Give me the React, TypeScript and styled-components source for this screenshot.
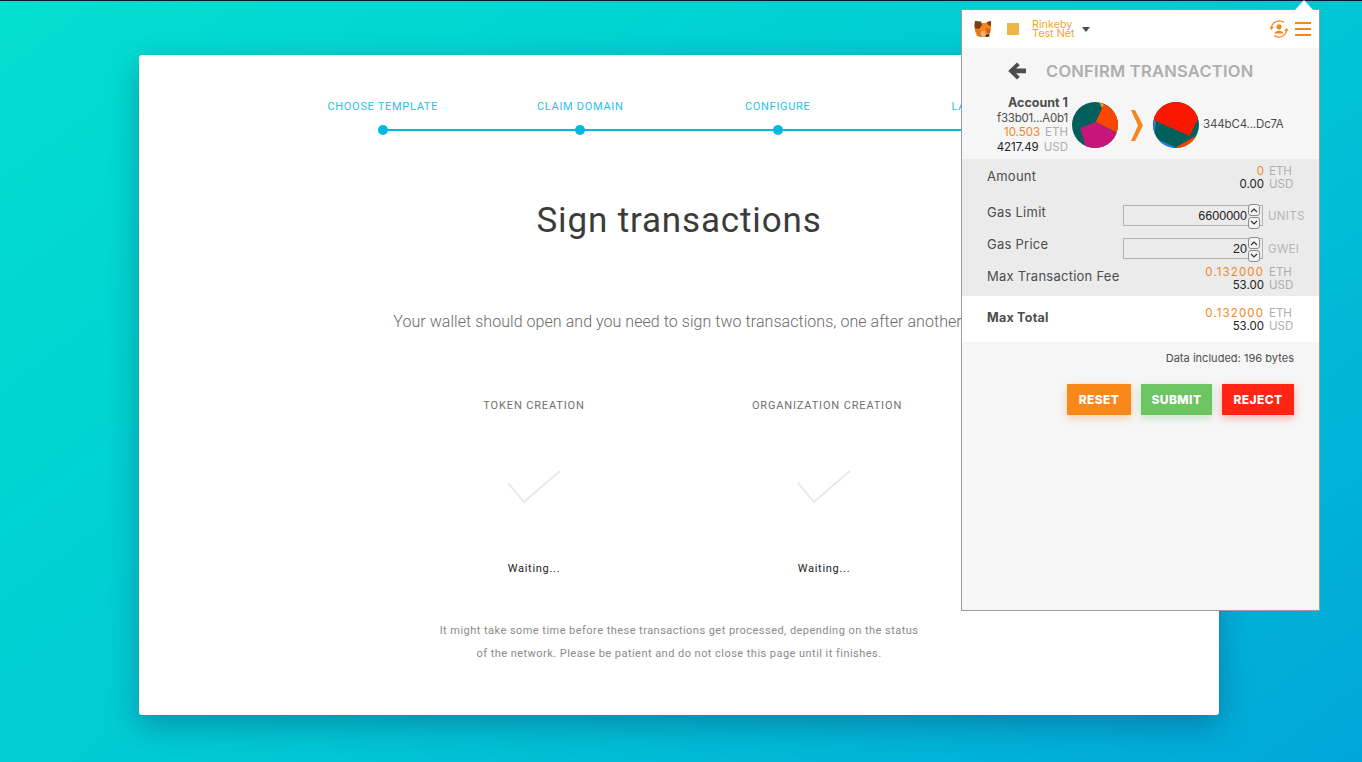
import React from "react";
import styled, { createGlobalStyle } from "styled-components";

const Global = createGlobalStyle`
  html, body { margin: 0; padding: 0; }
  body { width: 1362px; height: 762px; overflow: hidden; }
  * { box-sizing: border-box; }
`;

const Page = styled.div`
  position: relative;
  width: 1362px;
  height: 762px;
  border-top: 1px solid #0a1c20;
  padding: 54px 143px 47px 139px;
  background: linear-gradient(143deg, #03dfd0 0%, #00c9d4 52%, #00a6d9 100%);
  font-family: "Roboto", "Liberation Sans", sans-serif;
`;

const Card = styled.main`
  width: 1080px;
  height: 660px;
  background: #fff;
  border-radius: 3px;
  box-shadow: 0 10px 30px rgba(20, 40, 90, 0.35);
  padding-top: 45px;
  display: flex;
  flex-direction: column;
  align-items: center;
`;

const Stepper = styled.ol`
  list-style: none;
  margin: 0;
  padding: 0;
  width: 790px;
  display: grid;
  grid-template-columns: repeat(4, 1fr);
`;

const Step = styled.li<{ $last?: boolean }>`
  position: relative;
  height: 36px;
  text-align: center;
  font-size: 11px;
  line-height: 14px;
  letter-spacing: 0.7px;
  color: #1fc3e6;
  &::before {
    content: "";
    position: absolute;
    left: 50%;
    top: 29px;
    width: ${(p) => (p.$last ? "0" : "100%")};
    height: 2px;
    background: #00b9e3;
  }
  &::after {
    content: "";
    position: absolute;
    left: calc(50% - 5px);
    top: 25px;
    width: 10px;
    height: 10px;
    border-radius: 50%;
    background: #00b9e3;
  }
`;

const Title = styled.h1`
  margin: 62px 0 0;
  font-size: 35px;
  line-height: 46px;
  font-weight: 400;
  letter-spacing: 0.85px;
  color: #3b3b3b;
`;

const Lead = styled.p`
  margin: 67px 0 0;
  font-size: 16px;
  line-height: 22px;
  letter-spacing: 0.05px;
  font-weight: 300;
  color: #6a6a6a;
`;

const Tasks = styled.div`
  margin-top: 65px;
  width: 580px;
  display: grid;
  grid-template-columns: 1fr 1fr;
`;

const Task = styled.section`
  display: flex;
  flex-direction: column;
  align-items: center;
`;

const TaskName = styled.h2<{ $nudge?: number }>`
  margin: 0;
  padding-left: ${(p) => p.$nudge ?? 0}px;
  font-size: 11px;
  line-height: 16px;
  font-weight: 400;
  letter-spacing: 0.85px;
  color: #6f6f6f;
  white-space: nowrap;
`;

const TaskCheck = styled.svg`
  display: block;
  margin-top: 55px;
  width: 54px;
  height: 36px;
`;

const TaskState = styled.div`
  margin-top: 56px;
  font-size: 11px;
  line-height: 16px;
  letter-spacing: 0.7px;
  color: #222;
`;

const Note = styled.p`
  margin: 42px 0 0;
  text-align: center;
  font-size: 11px;
  line-height: 23px;
  letter-spacing: 0.46px;
  color: #8a8a8a;
`;

const Popup = styled.aside`
  position: absolute;
  left: 961px;
  top: 8px;
  width: 359px;
  height: 602px;
  background: #f6f6f6;
  border: 1px solid #9b9b9b;
  font-family: "Inter", "Liberation Sans", sans-serif;
  color: #4d4d4d;
  &::before {
    content: "";
    position: absolute;
    right: 6px;
    top: -10px;
    border-left: 9px solid transparent;
    border-right: 9px solid transparent;
    border-bottom: 10px solid #fff;
  }
`;

const Header = styled.header`
  height: 38px;
  background: #fff;
  display: flex;
  align-items: center;
  padding: 0 8px 0 12px;
`;

const Swatch = styled.span`
  width: 12px;
  height: 12px;
  margin-left: 15px;
  background: #eeb545;
`;

const Network = styled.div`
  margin-left: 13px;
  font-size: 10.8px;
  line-height: 9.5px;
  color: #f0a81b;
`;

const Caret = styled.span`
  margin-left: 7px;
  margin-top: 1px;
  border-left: 4px solid transparent;
  border-right: 4px solid transparent;
  border-top: 5px solid #4d4d4d;
`;

const HeaderRight = styled.div`
  margin-left: auto;
  display: flex;
  align-items: center;
  gap: 6px;
`;

const Heading = styled.div`
  height: 46px;
  display: flex;
  align-items: center;
  padding-left: 46px;
`;

const HeadingText = styled.h3`
  margin: 0 0 0 20px;
  font-size: 16.5px;
  font-weight: 600;
  letter-spacing: 0.25px;
  color: #aeaeae;
`;

const Accounts = styled.div`
  height: 65px;
  display: flex;
  align-items: flex-start;
`;

const Sender = styled.div`
  width: 106px;
  text-align: right;
  font-size: 11.5px;
  line-height: 14.3px;
  color: #4d4d4d;
  padding-top: 1px;
`;

const SenderName = styled.div`
  font-weight: 700;
  font-size: 12.5px;
  line-height: 15px;
  margin-bottom: 1px;
`;

const Short = styled.div`
  letter-spacing: -0.22px;
`;

const Num = styled.span<{ $accent?: boolean; $wide?: boolean }>`
  color: ${(p) => (p.$accent ? "#f6851b" : "#222")};
  letter-spacing: ${(p) => (p.$wide ? "1.1px" : "0")};
`;

const Unit = styled.span`
  color: #aeaeae;
  margin-left: 5px;
`;

const Pie = styled.svg<{ $gap: number }>`
  flex: none;
  width: 46px;
  height: 46px;
  margin: 8px 0 0 ${(p) => p.$gap}px;
`;

const ChevronIcon = styled.svg`
  flex: none;
  width: 12px;
  height: 31px;
  margin: 16px 0 0 13px;
`;

const Address = styled.div`
  margin: 23px 0 0 4px;
  font-size: 11.5px;
  line-height: 15px;
  letter-spacing: -0.15px;
  color: #4d4d4d;
`;

const Details = styled.div<{ $plain?: boolean }>`
  height: ${(p) => (p.$plain ? "46px" : "137px")};
  background: ${(p) => (p.$plain ? "#fff" : "#ebebeb")};
  padding: ${(p) => (p.$plain ? "10px" : "5px")} 25px 0;
  display: flex;
  flex-direction: column;
`;

const Row = styled.div<{ $h: number }>`
  height: ${(p) => p.$h}px;
  display: flex;
  align-items: flex-start;
  justify-content: space-between;
`;

const Label = styled.div<{ $bold?: boolean; $top?: number }>`
  font-size: ${(p) => (p.$bold ? "12.5px" : "13px")};
  line-height: 16px;
  letter-spacing: 0.25px;
  margin-top: ${(p) => p.$top ?? 0}px;
  font-weight: ${(p) => (p.$bold ? 700 : 400)};
  color: #4d4d4d;
`;

const Amounts = styled.div`
  padding-top: 1px;
  display: grid;
  grid-template-columns: auto 30px;
  font-size: 11.5px;
  line-height: 13px;
  text-align: right;
`;

const AmountUnit = styled.span`
  color: #aeaeae;
  text-align: left;
  padding-left: 5px;
`;

const GasField = styled.div<{ $top?: number }>`
  display: flex;
  align-items: center;
  gap: 5px;
  margin: ${(p) => p.$top ?? 0}px -11px 0 0;
`;

const GasBox = styled.div`
  position: relative;
  width: 140px;
  height: 21px;
  border: 1px solid #b4b4b4;
  background: #ebebeb;
  padding-right: 15px;
  text-align: right;
  font-family: "Liberation Sans", sans-serif;
  font-size: 12.5px;
  line-height: 20px;
  color: #222;
`;

const Spin = styled.div`
  position: absolute;
  right: 2px;
  top: -2px;
  width: 12px;
  display: flex;
  flex-direction: column;
  gap: 1px;
`;

const SpinBtn = styled.span`
  display: flex;
  align-items: center;
  justify-content: center;
  height: 12px;
  background: #f2f2f2;
  border: 1px solid #8c8c8c;
  border-radius: 3px;
`;

const GasUnit = styled.span`
  width: 37px;
  font-size: 11.5px;
  letter-spacing: 0.3px;
  color: #b5b5b5;
`;

const DataNote = styled.div`
  padding: 8px 25px 0 0;
  text-align: right;
  font-size: 11px;
  line-height: 16px;
  letter-spacing: 0.03px;
  color: #4d4d4d;
`;

const Actions = styled.div`
  margin-top: 18px;
  padding-right: 25px;
  display: flex;
  justify-content: flex-end;
  gap: 10px;
`;

const Action = styled.button<{ $bg: string; $shadow: string; $w: number }>`
  width: ${(p) => p.$w}px;
  height: 31px;
  border: 0;
  padding: 0;
  background: ${(p) => p.$bg};
  box-shadow: 0 3px 8px ${(p) => p.$shadow};
  color: #fff;
  font-family: inherit;
  font-size: 12px;
  font-weight: 800;
  letter-spacing: 0.4px;
`;

const Fox = () => (
  <svg width="18" height="18" viewBox="0 0 18 18" aria-hidden="true">
    <polygon points="1,1 7,3 11,3 17,1 17,7 16.5,11 15,16 11,17 7,17 3,16 1,11 0.5,7" fill="#f6851b" />
    <polygon points="1,1 7,1.5 8,5 5,9 1,8.5 0.5,5" fill="#763e1a" />
    <polygon points="13,2 17,1 17,6 14,5" fill="#763e1a" />
    <polygon points="2,10 7,10.5 9,14 8,17 4,16" fill="#e2761b" />
    <polygon points="7,11 11,11 12,16 9,17 6.5,15" fill="#f2b078" />
    <polygon points="12,8 16.5,9 16,13 13,13" fill="#cd6116" />
    <polygon points="11.5,15 15,14 15.5,16.5 12,17" fill="#3a2a1c" />
  </svg>
);

const SwitchIcon = () => (
  <svg width="20" height="20" viewBox="0 0 20 20" fill="none" stroke="#f6851b" strokeWidth="1.3" aria-hidden="true">
    <path d="M2.4 8.5 A8 8 0 0 1 15 3.5" />
    <path d="M17.6 11.5 A8 8 0 0 1 5 16.5" />
    <path d="M0.4 8 L2.6 11 L4.8 8 Z" fill="#f6851b" stroke="none" />
    <path d="M15.2 12 L17.4 9 L19.6 12 Z" fill="#f6851b" stroke="none" />
    <circle cx="10" cy="7.8" r="2.6" fill="#f6851b" stroke="none" />
    <path d="M5.6 14.6 C5.8 10.8 14.2 10.8 14.4 14.6 Z" fill="#f6851b" stroke="none" />
  </svg>
);

const MenuIcon = () => (
  <svg width="16" height="14" viewBox="0 0 16 14" aria-hidden="true">
    <rect y="0" width="16" height="2" fill="#f6851b" />
    <rect y="6" width="16" height="2" fill="#f6851b" />
    <rect y="12" width="16" height="2" fill="#f6851b" />
  </svg>
);

const BackIcon = () => (
  <svg width="18" height="18" viewBox="0 0 18 18" aria-hidden="true">
    <path d="M9 0.5 L11.8 3.2 L8 6.6 H18 V11.2 H8 L11.8 14.7 L9 17.4 L0.2 8.9 Z" fill="#4d4d4d" />
  </svg>
);

const Check = () => (
  <TaskCheck viewBox="0 0 54 36" aria-hidden="true">
    <path d="M1 14 L17 33 L53 2" fill="none" stroke="#e7e7e7" strokeWidth="1.8" />
  </TaskCheck>
);

const Up = () => (
  <svg width="8" height="6" viewBox="0 0 8 6" aria-hidden="true">
    <path d="M1 5 L4 2 L7 5" fill="none" stroke="#333" strokeWidth="1.2" />
  </svg>
);
const Down = () => (
  <svg width="8" height="6" viewBox="0 0 8 6" aria-hidden="true">
    <path d="M1 1 L4 4 L7 1" fill="none" stroke="#333" strokeWidth="1.2" />
  </svg>
);

const Gas = ({ value }: { value: string }) => (
  <GasBox>
    {value}
    <Spin>
      <SpinBtn><Up /></SpinBtn>
      <SpinBtn><Down /></SpinBtn>
    </Spin>
  </GasBox>
);

const Sum = ({ a, b, wide }: { a: string; b: string; wide?: boolean }) => (
  <Amounts>
    <Num $accent $wide={wide}>{a}</Num>
    <AmountUnit>ETH</AmountUnit>
    <Num>{b}</Num>
    <AmountUnit>USD</AmountUnit>
  </Amounts>
);

export default function App() {
  return (
    <>
      <Global />
      <Page>
        <Card>
          <Stepper>
            <Step>CHOOSE TEMPLATE</Step>
            <Step>CLAIM DOMAIN</Step>
            <Step>CONFIGURE</Step>
            <Step $last>LAUNCH</Step>
          </Stepper>
          <Title>Sign transactions</Title>
          <Lead>Your wallet should open and you need to sign two transactions, one after another.</Lead>
          <Tasks>
            <Task>
              <TaskName>TOKEN CREATION</TaskName>
              <Check />
              <TaskState>Waiting...</TaskState>
            </Task>
            <Task>
              <TaskName $nudge={6}>ORGANIZATION CREATION</TaskName>
              <Check />
              <TaskState>Waiting...</TaskState>
            </Task>
          </Tasks>
          <Note>
            It might take some time before these transactions get processed, depending on the status
            <br />
            of the network. Please be patient and do not close this page until it finishes.
          </Note>
        </Card>

        <Popup>
          <Header>
            <Fox />
            <Swatch />
            <Network>Rinkeby<br />Test Net</Network>
            <Caret />
            <HeaderRight>
              <SwitchIcon />
              <MenuIcon />
            </HeaderRight>
          </Header>
          <Heading>
            <BackIcon />
            <HeadingText>CONFIRM TRANSACTION</HeadingText>
          </Heading>
          <Accounts>
            <Sender>
              <SenderName>Account 1</SenderName>
              <Short>f33b01...A0b1</Short>
              <div><Num $accent>10.503</Num><Unit>ETH</Unit></div>
              <div><Num>4217.49</Num><Unit>USD</Unit></div>
            </Sender>
            <Pie $gap={4} viewBox="0 0 46 46" aria-hidden="true">
              <defs><clipPath id="pa"><circle cx="23" cy="23" r="23" /></clipPath></defs>
              <g clipPath="url(#pa)">
                <rect width="46" height="46" fill="#015f5c" />
                <polygon points="23.7,20 31.7,2.7 50,0 50,32 45,30.7" fill="#fb4600" />
                <polygon points="8.3,25.7 23.7,20 46,32 46,50 15,50" fill="#c8157a" />
                <polygon points="27,0 32,2.7 30,6" fill="#f5a00a" />
              </g>
            </Pie>
            <ChevronIcon viewBox="0 0 12 31" aria-hidden="true">
              <path d="M0 0 H4 L12 15.5 L4 31 H0 L7 15.5 Z" fill="#f6851b" />
            </ChevronIcon>
            <Pie $gap={10} viewBox="0 0 46 46" aria-hidden="true">
              <defs><clipPath id="pb"><circle cx="23" cy="23" r="23" /></clipPath></defs>
              <g clipPath="url(#pb)">
                <rect width="46" height="46" fill="#015f5c" />
                <polygon points="0,30 1,18.3 3,19 1.5,32" fill="#2a80e0" />
                <polygon points="6,38 22,45 20,48 8,44" fill="#2a80e0" />
                <polygon points="23.3,45 41,35 48,33 46,50 30,50" fill="#fb4600" />
                <polygon points="1,18.3 0,0 46,0 45,16.7 36.7,34" fill="#fb1800" />
              </g>
            </Pie>
            <Address>344bC4...Dc7A</Address>
          </Accounts>
          <Details>
            <Row $h={41}>
              <Label $top={4}>Amount</Label>
              <Sum a="0" b="0.00" />
            </Row>
            <Row $h={32}>
              <Label $top={-1}>Gas Limit</Label>
              <GasField><Gas value="6600000" /><GasUnit>UNITS</GasUnit></GasField>
            </Row>
            <Row $h={28}>
              <Label $top={-1}>Gas Price</Label>
              <GasField $top={1}><Gas value="20" /><GasUnit>GWEI</GasUnit></GasField>
            </Row>
            <Row $h={30}>
              <Label $top={3}>Max Transaction Fee</Label>
              <Sum a="0.132000" b="53.00" wide />
            </Row>
          </Details>
          <Details $plain>
            <Row $h={30}>
              <Label $bold $top={4}>Max Total</Label>
              <Sum a="0.132000" b="53.00" wide />
            </Row>
          </Details>
          <DataNote>Data included: 196 bytes</DataNote>
          <Actions>
            <Action $w={64} $bg="#f9881b" $shadow="rgba(249,136,27,.35)">RESET</Action>
            <Action $w={71} $bg="#6cc463" $shadow="rgba(108,196,99,.35)">SUBMIT</Action>
            <Action $w={72} $bg="#ff2414" $shadow="rgba(255,36,20,.35)">REJECT</Action>
          </Actions>
        </Popup>
      </Page>
    </>
  );
}
